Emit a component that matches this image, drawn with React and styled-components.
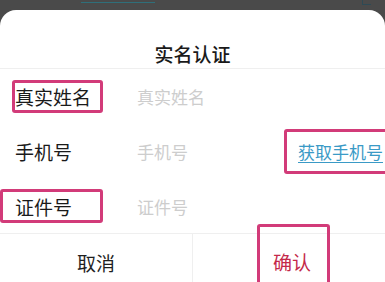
import React from 'react';
import styled, {createGlobalStyle} from 'styled-components';

const GlobalStyle = createGlobalStyle`
    html, body {
        margin: 0;
        padding: 0;
        background: #4a4a4a;
        font-family: "Noto Sans CJK SC", "Noto Sans", sans-serif;
        overflow: hidden;
    }
`;

const Page = styled.div`
    width: 385px;
    height: 282px;
    display: flex;
    flex-direction: column;
    overflow: hidden;
`;

const Backdrop = styled.div`
    height: 10px;
    flex-shrink: 0;
    display: flex;
    align-items: flex-start;
    background: #4a4a4a;
`;

const BackdropLink = styled.span`
    margin-left: 81px;
    width: 74px;
    height: 2px;
    border-bottom: 1px solid #2f6f7a;
`;

const BackdropIcon = styled.span`
    margin-left: auto;
    margin-right: 14px;
    width: 8px;
    height: 4px;
    border-left: 1px solid #2e4a55;
    border-bottom: 1px solid #2e4a55;
`;

const Sheet = styled.div`
    flex: 1;
    background: #fff;
    border-radius: 16px 16px 0 0;
    display: flex;
    flex-direction: column;
`;

const Header = styled.div`
    height: 59px;
    display: flex;
    align-items: flex-end;
    justify-content: center;
    padding-bottom: 1px;
    box-sizing: border-box;
    border-bottom: 1px solid #efefef;
`;

const Title = styled.h2`
    margin: 0;
    font-size: 19px;
    font-weight: 500;
    color: #1a1a1a;
    line-height: 26px;
`;

const Form = styled.div`
    display: flex;
    flex-direction: column;
    border-bottom: 1px solid #efefef;
`;

const Row = styled.div`
    height: ${p => p.$h}px;
    display: flex;
    align-items: center;
    padding-left: 15px;
`;

const Label = styled.span`
    position: relative;
    width: 122px;
    font-size: 19px;
    color: #1a1a1a;
    line-height: 22px;
`;

const Input = styled.span`
    flex: 1;
    font-size: 17px;
    color: #cdcdcd;
    line-height: 22px;
`;

const PhoneLink = styled.span`
    position: relative;
    margin-right: 2px;
    font-size: 17px;
    color: #3a9ac6;
    text-decoration: underline;
    text-underline-offset: 3px;
    white-space: nowrap;
    line-height: 22px;
`;

/* annotation outline drawn over a part of the screenshot */
const Highlight = styled.span`
    position: absolute;
    top: ${p => p.$t}px;
    left: ${p => p.$l}px;
    right: ${p => p.$r}px;
    bottom: ${p => p.$b}px;
    border: 3px solid #d23b79;
    border-radius: 3px;
    pointer-events: none;
`;

const Actions = styled.div`
    display: flex;
    height: 56px;
`;

const Action = styled.div`
    flex: 1;
    display: flex;
    align-items: center;
    justify-content: center;
    font-size: 19px;
    color: ${p => p.$primary ? '#c4284a' : '#1f1f1f'};
    border-left: ${p => p.$primary ? '1px solid #efefef' : 'none'};
`;

const ActionText = styled.span`
    position: relative;
    margin-left: 6px;
    line-height: 22px;
`;

export default function App() {
    return (
        <Page>
            <GlobalStyle />
            <Backdrop>
                <BackdropLink />
                <BackdropIcon />
            </Backdrop>
            <Sheet>
                <Header>
                    <Title>实名认证</Title>
                </Header>
                <Form>
                    <Row $h={55}>
                        <Label>
                            真实姓名
                            <Highlight $t={-6} $l={-3} $r={34} $b={-5} />
                        </Label>
                        <Input>真实姓名</Input>
                    </Row>
                    <Row $h={56}>
                        <Label>手机号</Label>
                        <Input>手机号</Input>
                        <PhoneLink>
                            获取手机号
                            <Highlight $t={-12} $l={-14} $r={-20} $b={-11} />
                        </PhoneLink>
                    </Row>
                    <Row $h={53}>
                        <Label>
                            证件号
                            <Highlight $t={-7} $l={-15} $r={34} $b={-5} />
                        </Label>
                        <Input>证件号</Input>
                    </Row>
                </Form>
                <Actions>
                    <Action>取消</Action>
                    <Action $primary>
                        <ActionText>
                            确认
                            <Highlight $t={-27} $l={-16} $r={-19} $b={-40} />
                        </ActionText>
                    </Action>
                </Actions>
            </Sheet>
        </Page>
    );
}
